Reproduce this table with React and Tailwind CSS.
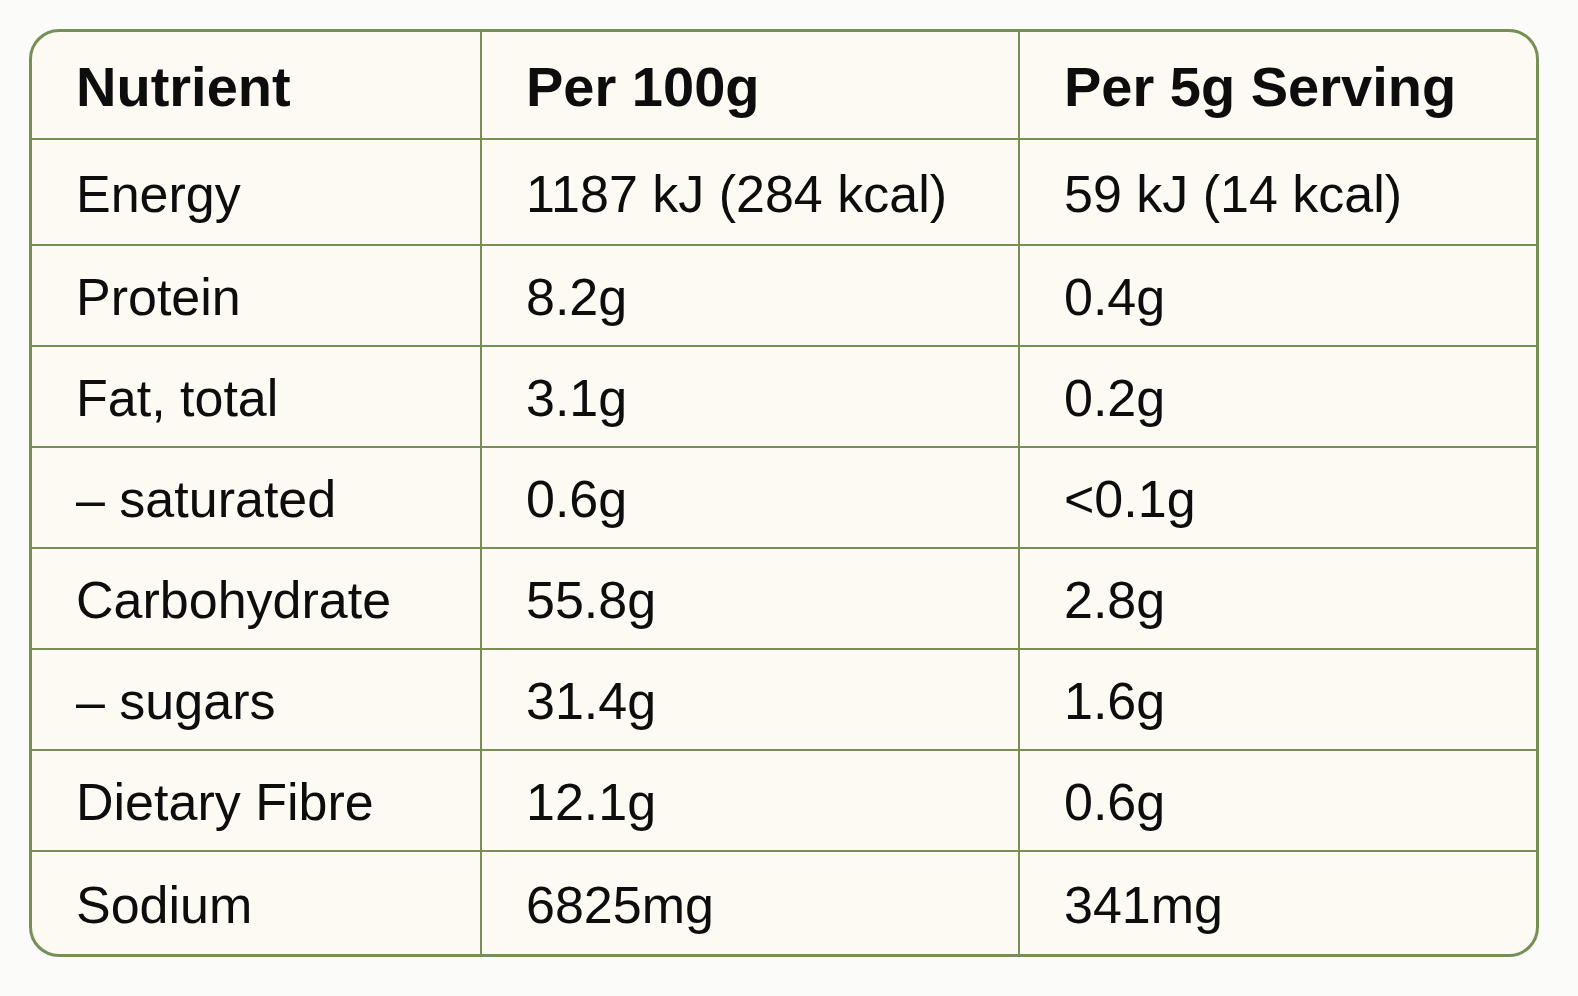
import React from 'react';

// Nutrition information panel: nutrient name, per 100g, per 5g serving
const rows = [
  { name: 'Energy', per100: '1187 kJ (284 kcal)', serving: '59 kJ (14 kcal)', h: 'h-[106px]' },
  { name: 'Protein', per100: '8.2g', serving: '0.4g', h: 'h-[101px]' },
  { name: 'Fat, total', per100: '3.1g', serving: '0.2g', h: 'h-[101px]' },
  { name: '– saturated', per100: '0.6g', serving: '<0.1g', h: 'h-[101px]' },
  { name: 'Carbohydrate', per100: '55.8g', serving: '2.8g', h: 'h-[101px]' },
  { name: '– sugars', per100: '31.4g', serving: '1.6g', h: 'h-[101px]' },
  { name: 'Dietary Fibre', per100: '12.1g', serving: '0.6g', h: 'h-[101px]' },
  { name: 'Sodium', per100: '6825mg', serving: '341mg', h: 'h-[102px]' },
];

const Cell = ({ children, last, bottom, className = '' }) => (
  <div
    className={`flex items-center pl-[44px] pt-[3px] border-[#768f56] ${last ? '' : 'border-r-2'} ${
      bottom ? 'border-b-2' : ''
    } ${className}`}
  >
    {children}
  </div>
);

export default function App() {
  return (
    <div className="min-h-screen w-full bg-[#fbfbf9] pt-[29px] pl-[29px] font-['Liberation_Sans',Arial,sans-serif] text-[#0d0d0d]">
      <div className="w-[1510px] rounded-[30px] border-[3px] border-[#768f56] bg-[#fcfaf3] overflow-hidden">
        {/* Header */}
        <div className="grid grid-cols-[450px_538px_516px] h-[108px] text-[56px] font-bold">
          <Cell bottom>Nutrient</Cell>
          <Cell bottom>Per 100g</Cell>
          <Cell bottom last>Per 5g Serving</Cell>
        </div>

        {/* Body rows */}
        {rows.map((row, i) => {
          const bottom = i < rows.length - 1;
          return (
            <div
              key={row.name}
              className={`grid grid-cols-[450px_538px_516px] ${row.h} text-[52px]`}
            >
              <Cell bottom={bottom}>{row.name}</Cell>
              <Cell bottom={bottom}>{row.per100}</Cell>
              <Cell bottom={bottom} last>{row.serving}</Cell>
            </div>
          );
        })}
      </div>
    </div>
  );
}
